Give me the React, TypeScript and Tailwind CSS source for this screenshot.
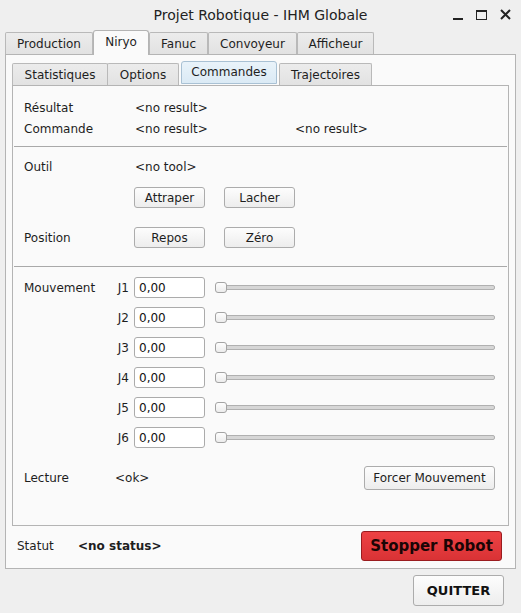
import React from 'react'

const outerTabs = [
  { label: 'Production', w: 88 },
  { label: 'Niryo', w: 56, active: true },
  { label: 'Fanuc', w: 59 },
  { label: 'Convoyeur', w: 89 },
  { label: 'Afficheur', w: 77 },
]

const joints = ['J1', 'J2', 'J3', 'J4', 'J5', 'J6']

function Btn({ children, className = '' }: { children: React.ReactNode; className?: string }) {
  return (
    <button
      className={
        'flex items-center justify-center rounded-[3px] border border-[#acacac] bg-gradient-to-b from-[#fdfdfd] to-[#ededed] text-[#1e1e1e] ' +
        className
      }
    >
      {children}
    </button>
  )
}

function Slider() {
  return (
    <div className="flex items-center flex-1 ml-[10px] mr-[13px]">
      <div className="w-[12px] h-[11px] rounded-[3px] border border-[#a3a3a3] bg-gradient-to-b from-[#fdfdfd] to-[#ececec] z-10"></div>
      <div className="flex-1 h-[5px] -ml-[1px] rounded-r-[2px] border border-[#b0b0b0] bg-[#d6d6d6]"></div>
    </div>
  )
}

export default function App() {
  return (
    <div
      className="relative w-[521px] h-[613px] overflow-hidden bg-[#efefef] text-[12px] text-[#1e1e1e]"
      style={{ fontFamily: '"DejaVu Sans", Verdana, sans-serif' }}
    >
      {/* title bar */}
      <div className="h-[30px] flex items-center justify-center text-[14px] text-[#222]">
        Projet Robotique - IHM Globale
      </div>
      <div className="absolute top-[9px] right-[10px] flex items-center gap-[13px]">
        <div className="w-[10px] h-[11px] flex items-end">
          <div className="w-[10px] h-[2px] bg-[#222]"></div>
        </div>
        <div className="w-[11px] h-[10px] border border-[#222] border-t-2"></div>
        <svg width="11" height="11" viewBox="0 0 11 11">
          <path d="M1 1 L10 10 M10 1 L1 10" stroke="#222" strokeWidth="2" />
        </svg>
      </div>

      {/* outer tabs */}
      <div className="flex items-end pl-[5px] h-[24px]">
        {outerTabs.map((t) =>
          t.active ? (
            <div
              key={t.label}
              style={{ width: t.w }}
              className="h-[25px] -mb-px z-10 flex items-center justify-center border border-b-0 border-[#b4b4b4] rounded-t-[3px] bg-[#fafafa] pb-[2px]"
            >
              {t.label}
            </div>
          ) : (
            <div
              key={t.label}
              style={{ width: t.w }}
              className="h-[22px] flex items-center justify-center border border-b-0 border-[#b9b9b9] rounded-t-[2px] bg-gradient-to-b from-[#ececec] to-[#e2e2e2]"
            >
              {t.label}
            </div>
          )
        )}
      </div>

      {/* outer pane */}
      <div className="mx-[5px] h-[515px] border border-[#b4b4b4] bg-[#fafafa] px-[6px] pt-[7px] flex flex-col">
        {/* inner tabs */}
        <div className="flex items-end h-[23px]">
          <div className="w-[96px] h-[22px] flex items-center justify-center border border-b-0 border-[#b9b9b9] rounded-t-[2px] bg-gradient-to-b from-[#ececec] to-[#e2e2e2]">
            Statistiques
          </div>
          <div className="w-[72px] h-[22px] -ml-px flex items-center justify-center border border-b-0 border-[#b9b9b9] rounded-t-[2px] bg-gradient-to-b from-[#ececec] to-[#e2e2e2]">
            Options
          </div>
          <div className="w-[96px] h-[23px] ml-[2px] mb-px flex items-center justify-center border border-[#a9c1d4] rounded-t-[3px] bg-gradient-to-b from-[#e9f3fa] to-[#dbeaf5] pb-[2px]">
            Commandes
          </div>
          <div className="w-[93px] h-[22px] ml-[2px] flex items-center justify-center border border-b-0 border-[#b9b9b9] rounded-t-[2px] bg-gradient-to-b from-[#ececec] to-[#e2e2e2]">
            Trajectoires
          </div>
        </div>

        {/* inner pane */}
        <div className="h-[441px] border border-[#b4b4b4] bg-[#fafafa] flex flex-col pt-[11px]">
          <div className="h-[21px] flex items-center pl-[11px]">
            <span className="w-[111px]">Résultat</span>
            <span>&lt;no result&gt;</span>
          </div>
          <div className="h-[21px] flex items-center pl-[11px]">
            <span className="w-[111px]">Commande</span>
            <span className="w-[160px]">&lt;no result&gt;</span>
            <span>&lt;no result&gt;</span>
          </div>

          <div className="mt-[7px] mx-[1px] h-px bg-[#a9a9a9]"></div>

          <div className="mt-[10px] h-[20px] flex items-center pl-[11px]">
            <span className="w-[111px]">Outil</span>
            <span>&lt;no tool&gt;</span>
          </div>
          <div className="mt-[10px] h-[21px] flex items-center pl-[121px] gap-[19px]">
            <Btn className="w-[71px] h-[21px]">Attraper</Btn>
            <Btn className="w-[71px] h-[21px]">Lacher</Btn>
          </div>
          <div className="mt-[19px] h-[21px] flex items-center pl-[11px]">
            <span className="w-[110px]">Position</span>
            <div className="flex gap-[19px]">
              <Btn className="w-[71px] h-[21px]">Repos</Btn>
              <Btn className="w-[71px] h-[21px]">Zéro</Btn>
            </div>
          </div>

          <div className="mt-[18px] mx-[1px] h-px bg-[#a9a9a9]"></div>

          <div className="mt-[10px] flex pl-[11px]">
            <span className="w-[83px] h-[21px] flex items-center">Mouvement</span>
            <div className="flex-1 flex flex-col gap-[9px]">
              {joints.map((j) => (
                <div key={j} className="h-[21px] flex items-center">
                  <span className="w-[27px] text-right pr-[5px]">{j}</span>
                  <div className="w-[71px] h-[21px] flex items-center pl-[4px] border border-[#ababab] rounded-[3px] bg-white text-[#111]">
                    0,00
                  </div>
                  <Slider />
                </div>
              ))}
            </div>
          </div>

          <div className="mt-[18px] h-[24px] flex items-center pl-[11px] pr-[13px]">
            <span className="w-[91px]">Lecture</span>
            <span className="flex-1">&lt;ok&gt;</span>
            <Btn className="w-[131px] h-[24px]">Forcer Mouvement</Btn>
          </div>
        </div>

        {/* status row */}
        <div className="mt-[5px] h-[30px] flex items-center pl-[5px] pr-[7px]">
          <span className="w-[61px]">Statut</span>
          <span className="flex-1 font-bold">&lt;no status&gt;</span>
          <button className="w-[141px] h-[30px] rounded-[3px] border border-[#9a1c1f] bg-gradient-to-b from-[#ee4244] to-[#d93235] text-[15px] font-bold text-[#1a0505]">
            Stopper Robot
          </button>
        </div>
      </div>

      {/* footer */}
      <div className="flex justify-end pr-[17px] pt-[6px]">
        <Btn className="w-[91px] h-[31px] font-bold text-[13px] text-[#111]">QUITTER</Btn>
      </div>
    </div>
  )
}
